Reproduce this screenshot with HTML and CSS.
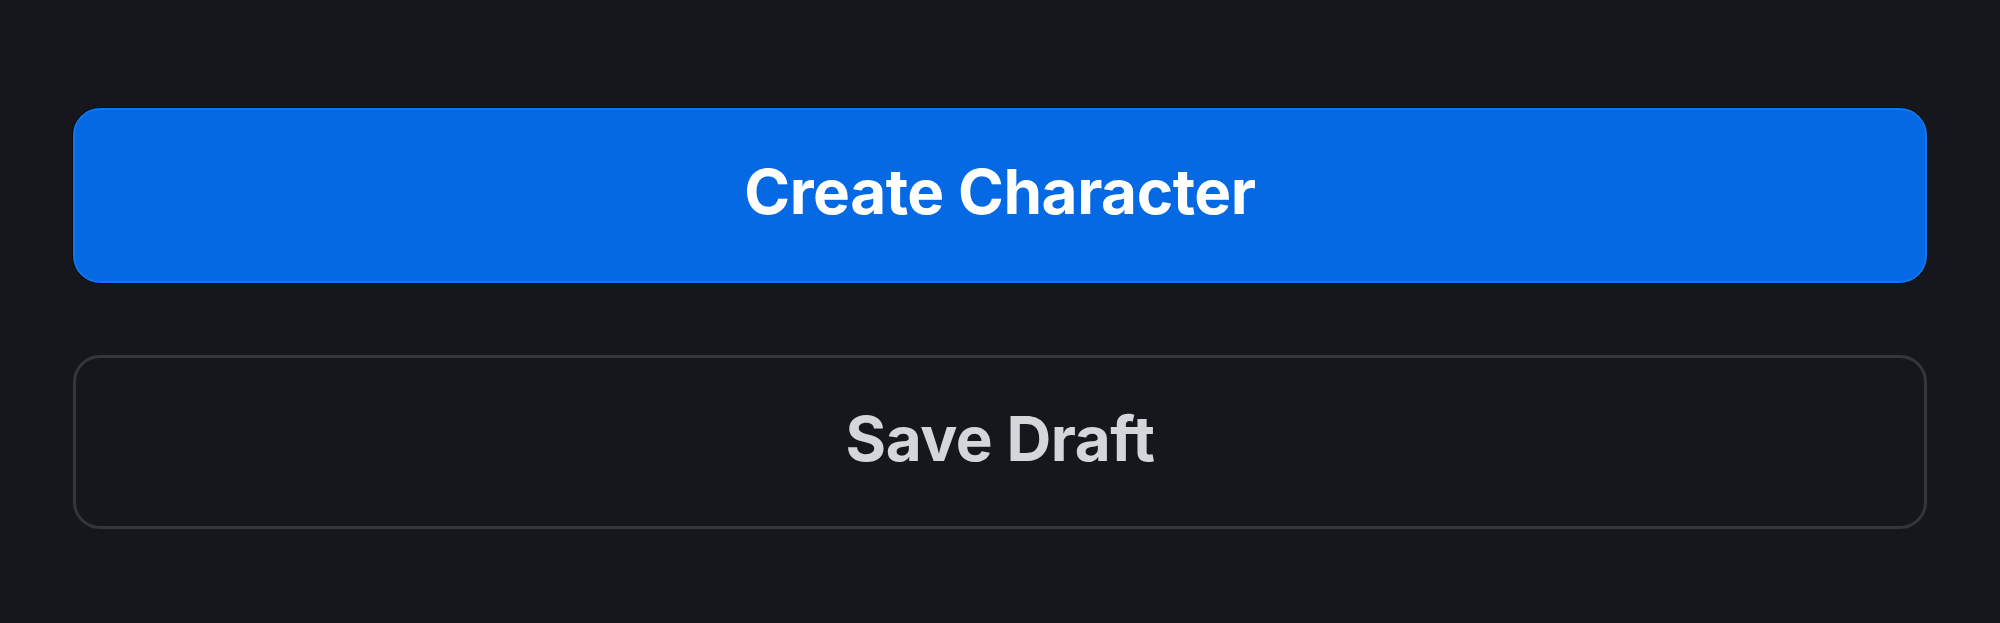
FILE: index.html
```html
<!DOCTYPE html>
<html>
<head>
<meta charset="utf-8">
<link rel="stylesheet" href="styles.css">
</head>
<body>
<div class="actions">
  <button class="btn btn-primary">Create Character</button>
  <button class="btn btn-secondary">Save Draft</button>
</div>
</body>
</html>
```
FILE: styles.css
```css
html, body {
  margin: 0;
  padding: 0;
  background: #15171c;
  width: 2000px;
  height: 623px;
  overflow: hidden;
}
.actions {
  display: flex;
  flex-direction: column;
  gap: 72px;
  padding: 108px 73px 0 73px;
}
.btn {
  height: 175px;
  border-radius: 27px;
  font-family: Inter, "Liberation Sans", sans-serif;
  font-weight: 700;
  font-size: 62px;
  letter-spacing: -0.45px;
  cursor: pointer;
  display: flex;
  align-items: center;
  justify-content: center;
  padding: 0 0 8px 0;
}
.btn-primary {
  background: #0469e3;
  color: #ffffff;
  border: 2px solid #1474ea;
  box-shadow: 0 0 0 1px #0b0c10;
}
.btn-secondary {
  background: #15171c;
  color: #d5d6da;
  border: 3px solid #33363c;
  height: 174px;
}
```
